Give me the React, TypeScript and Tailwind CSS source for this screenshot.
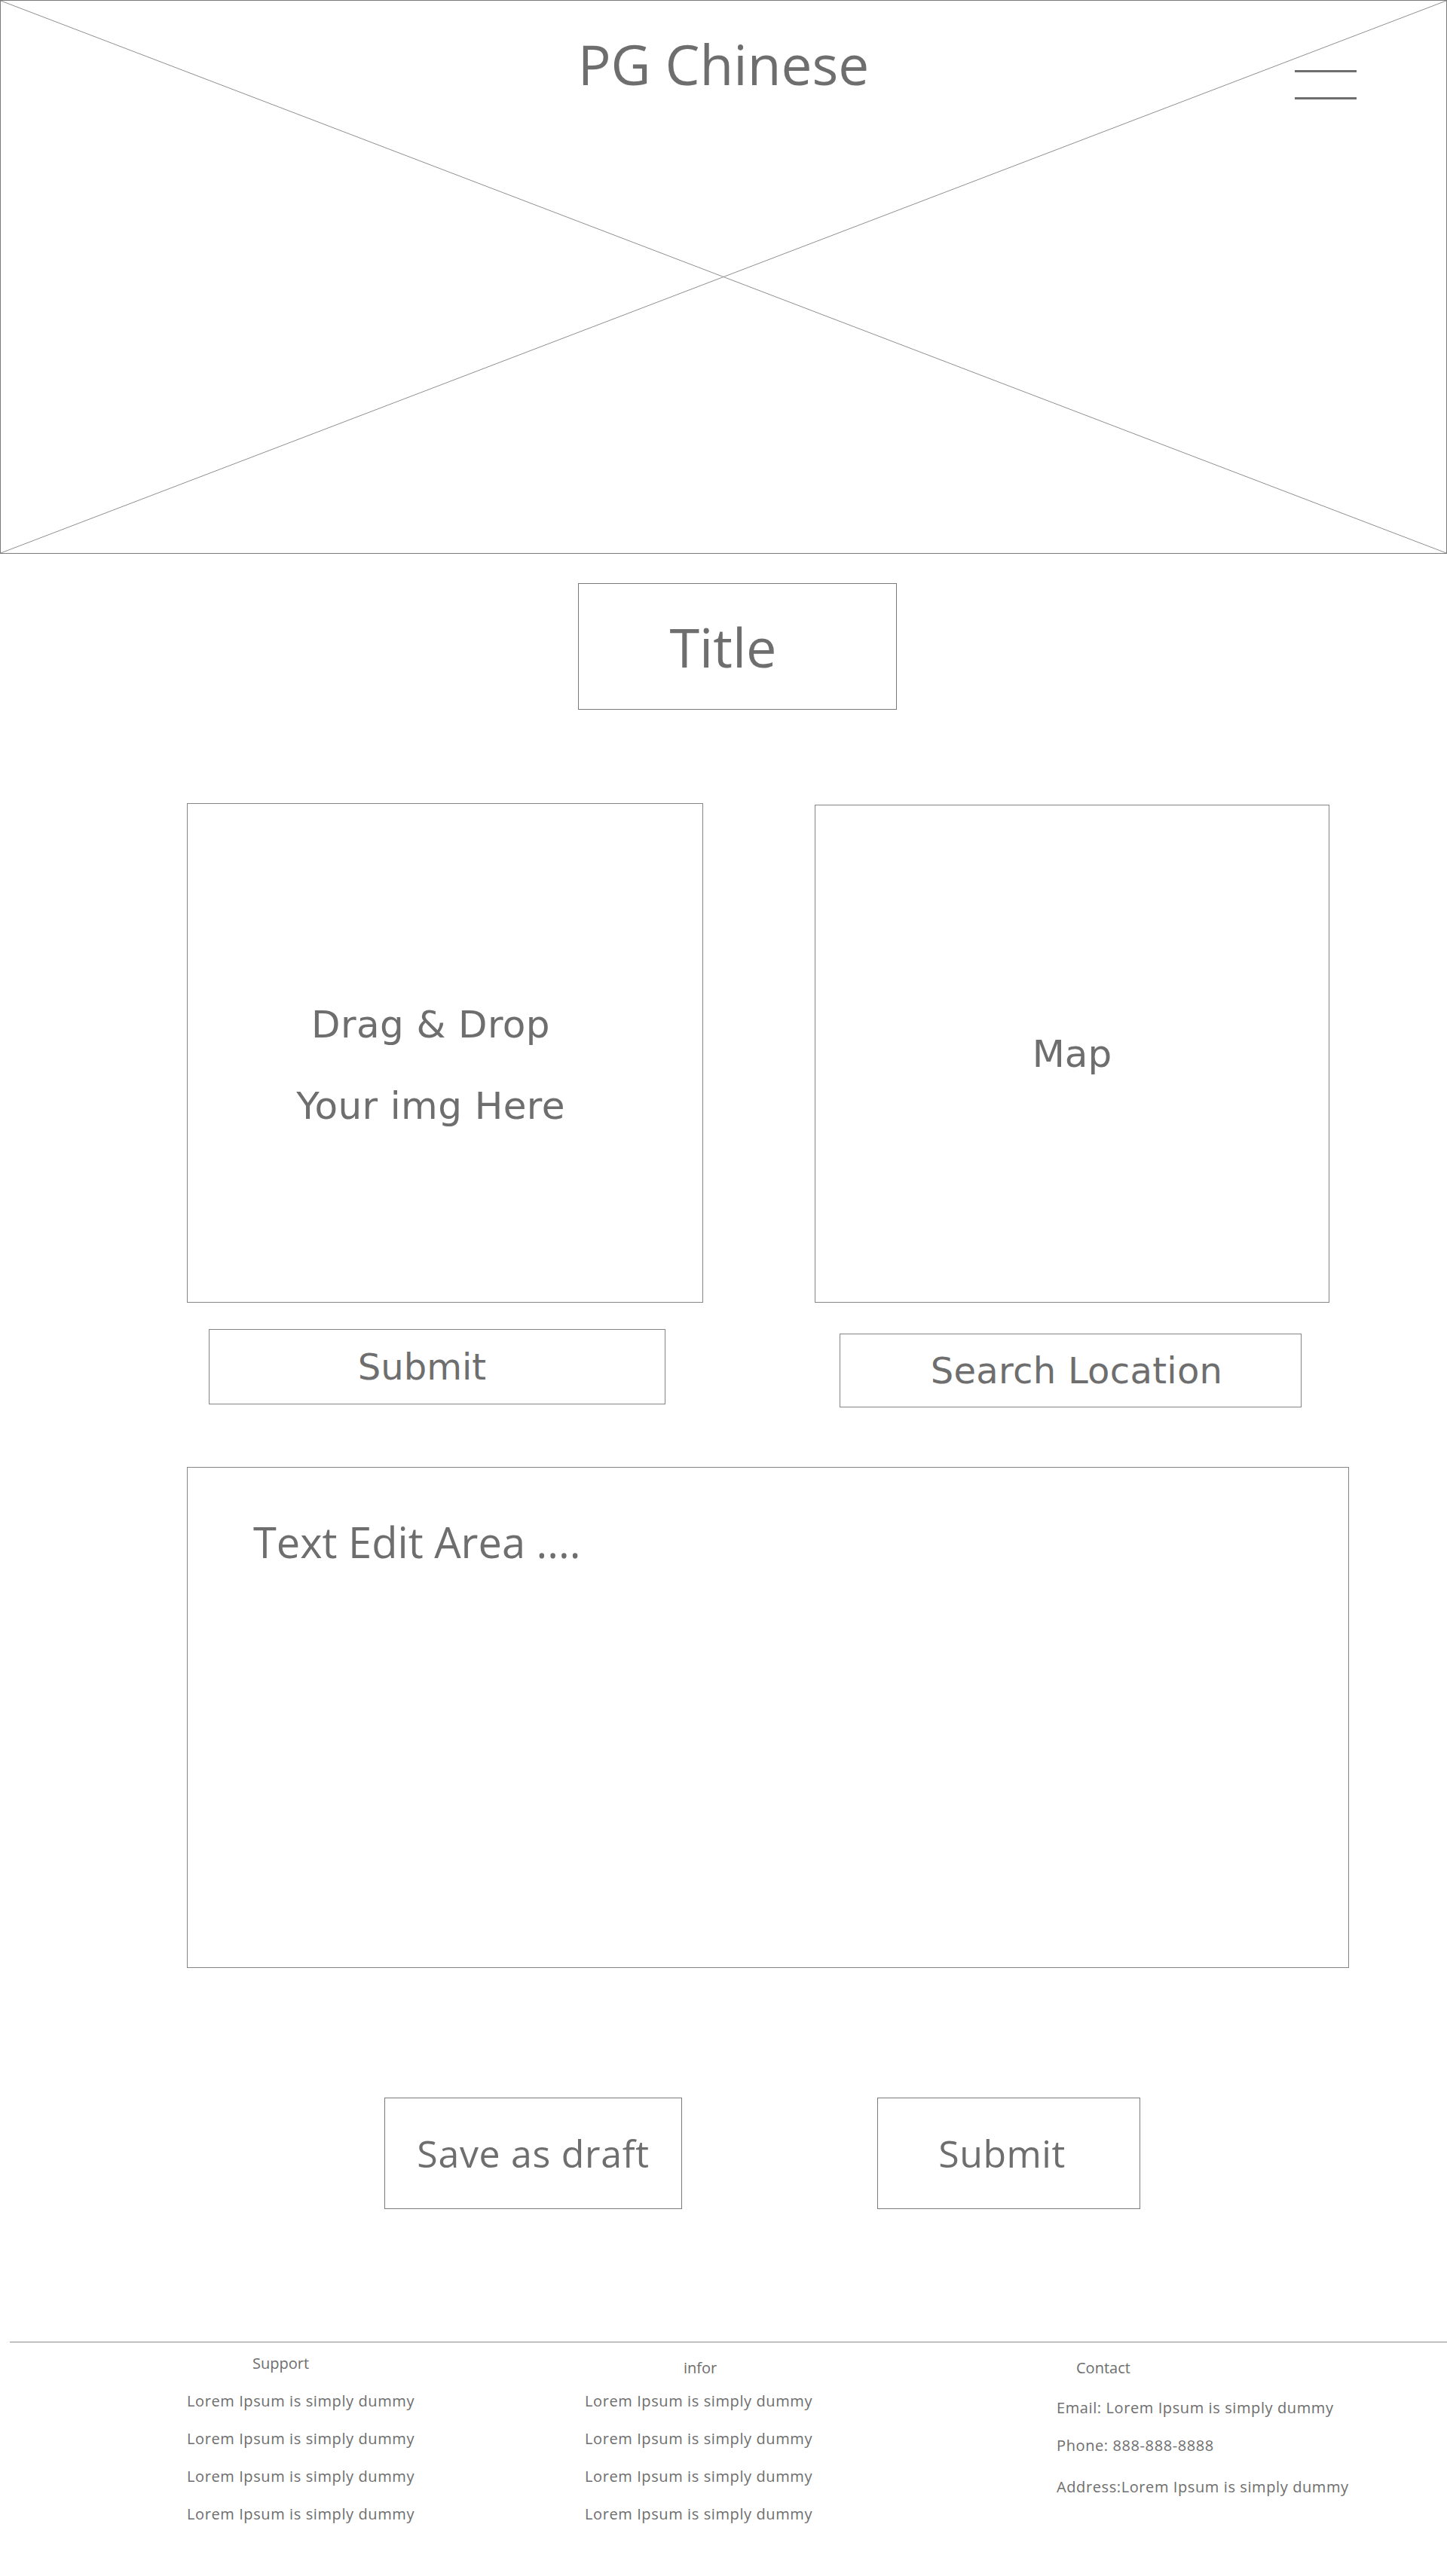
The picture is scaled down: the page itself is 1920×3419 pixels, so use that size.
const SANS = "font-['Open_Sans',sans-serif]";
const WIDE = "font-['DejaVu_Sans',sans-serif]";

const supportLinks = ['Lorem Ipsum is simply dummy', 'Lorem Ipsum is simply dummy', 'Lorem Ipsum is simply dummy', 'Lorem Ipsum is simply dummy'];

function Hero() {
  return (
    <div className="relative h-[735px] w-full border border-[#7a7a7a]">
      {/* placeholder cross */}
      <svg className="absolute inset-0 h-full w-full" viewBox="0 0 100 100" preserveAspectRatio="none">
        <line x1="0" y1="0" x2="100" y2="100" stroke="#8f8f8f" strokeWidth="1" vectorEffect="non-scaling-stroke" />
        <line x1="100" y1="0" x2="0" y2="100" stroke="#8f8f8f" strokeWidth="1" vectorEffect="non-scaling-stroke" />
      </svg>
      <div className="relative flex justify-center pt-[47px]">
        <h1 className={`${SANS} text-[73px] leading-none text-[#6e6e6e]`}>PG Chinese</h1>
      </div>
      <div className="absolute right-[119px] top-[92px] flex w-[82px] flex-col gap-[33px]">
        <span className="block h-[3px] w-full bg-[#6e6e6e]" />
        <span className="block h-[3px] w-full bg-[#6e6e6e]" />
      </div>
    </div>
  );
}

function FooterCol({ title, items, titleClass, itemsClass }: { title: string; items: string[]; titleClass: string; itemsClass: string }) {
  return (
    <div className="flex flex-col">
      <p className={`${SANS} text-[20px] leading-[28px] text-[#6e6e6e] ${titleClass}`}>{title}</p>
      <div className={`flex flex-col ${itemsClass}`}>
        {items.map((t, i) => (
          <p key={i} className={`${SANS} text-[20px] leading-[28px] tracking-[0.6px] text-[#6e6e6e]`}>
            {t}
          </p>
        ))}
      </div>
    </div>
  );
}

export default function App() {
  return (
    <div className="h-[3419px] w-[1920px] bg-white">
      <Hero />

      {/* Title */}
      <div className="pl-[767px] pt-[39px]">
        <div className="flex h-[168px] w-[423px] items-center justify-center border border-[#7a7a7a] pr-[38px]">
          <span className={`${SANS} text-[72px] leading-none text-[#6e6e6e]`}>Title</span>
        </div>
      </div>

      {/* Upload + map */}
      <div className="flex pl-[248px] pt-[124px]">
        <div className="flex w-[685px] flex-col">
          <div className="flex h-[663px] flex-col items-center justify-center gap-[58px] border border-[#858585] pr-[38px] pt-[32px]">
            <span className={`${WIDE} text-[50px] leading-none tracking-[0.4px] text-[#6e6e6e]`}>Drag &amp; Drop</span>
            <span className={`${WIDE} text-[50px] leading-none tracking-[0.4px] text-[#6e6e6e]`}>Your img Here</span>
          </div>
          <div className="ml-[29px] mt-[35px] flex h-[100px] w-[606px] items-center justify-center border border-[#858585] pr-[40px]">
            <span className={`${WIDE} text-[48px] leading-none text-[#6e6e6e]`}>Submit</span>
          </div>
        </div>

        <div className="ml-[148px] flex w-[683px] flex-col pt-[2px]">
          <div className="flex h-[661px] items-center justify-center border border-[#858585]">
            <span className={`${WIDE} text-[50px] leading-none text-[#6e6e6e]`}>Map</span>
          </div>
          <div className="ml-[33px] mt-[41px] flex h-[98px] w-[613px] items-center justify-center border border-[#858585] pl-[16px]">
            <span className={`${WIDE} text-[48px] leading-none tracking-[0.3px] text-[#6e6e6e]`}>Search Location</span>
          </div>
        </div>
      </div>

      {/* Text edit area */}
      <div className="pl-[248px] pt-[79px]">
        <div className="h-[665px] w-[1542px] border border-[#858585] pl-[87px] pt-[68px]">
          <p className={`${SANS} text-[56px] leading-[60px] text-[#6e6e6e]`}>Text Edit Area ....</p>
        </div>
      </div>

      {/* Actions */}
      <div className="flex pl-[510px] pt-[172px]">
        <div className="flex h-[148px] w-[395px] items-center justify-center border border-[#7a7a7a]">
          <span className={`${SANS} text-[50px] leading-none tracking-[0.7px] text-[#6e6e6e]`}>Save as draft</span>
        </div>
        <div className="ml-[259px] flex h-[148px] w-[349px] items-center justify-center border border-[#7a7a7a] pr-[18px]">
          <span className={`${SANS} text-[50px] leading-none tracking-[0.5px] text-[#6e6e6e]`}>Submit</span>
        </div>
      </div>

      {/* Footer */}
      <div className="pl-[13px] pt-[176px]">
        <div className="h-px w-full bg-[#8a8a8a]" />
      </div>
      <div className="flex pt-[14px]">
        <div className="ml-[248px] w-[305px]">
          <FooterCol title="Support" items={supportLinks} titleClass="pl-[87px]" itemsClass="mt-[22px] gap-[22px]" />
        </div>
        <div className="ml-[223px] w-[305px]">
          <FooterCol title="infor" items={supportLinks} titleClass="pl-[131px] pt-[6px]" itemsClass="mt-[16px] gap-[22px]" />
        </div>
        <div className="ml-[321px]">
          <div className="flex flex-col pt-[6px]">
            <p className={`${SANS} pl-[26px] text-[20px] leading-[28px] text-[#6e6e6e]`}>Contact</p>
            <p className={`${SANS} mt-[25px] text-[20px] leading-[28px] tracking-[0.6px] text-[#6e6e6e]`}>Email: Lorem Ipsum is simply dummy</p>
            <p className={`${SANS} mt-[22px] text-[20px] leading-[28px] tracking-[0.6px] text-[#6e6e6e]`}>Phone: 888-888-8888</p>
            <p className={`${SANS} mt-[27px] text-[20px] leading-[28px] tracking-[0.6px] text-[#6e6e6e]`}>Address:Lorem Ipsum is simply dummy</p>
          </div>
        </div>
      </div>
    </div>
  );
}
